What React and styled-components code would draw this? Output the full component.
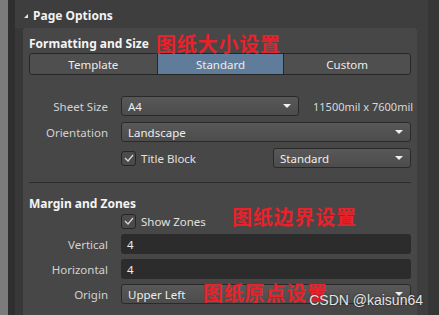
import styled, { createGlobalStyle } from "styled-components";

const GlobalStyle = createGlobalStyle`
  html, body {
    margin: 0;
    padding: 0;
    background: #3c3c3c;
    overflow: hidden;
  }
  body {
    font-family: "Noto Sans", "Open Sans", sans-serif;
    font-size: 11.5px;
    color: #d6d6d6;
  }
`;

const Window = styled.div`
  display: flex;
  width: 439px;
  height: 315px;
  position: relative;
  overflow: hidden;
`;

const Strip = styled.div`
  width: ${(p) => p.$w}px;
  background: ${(p) => p.$bg};
  flex-shrink: 0;
`;

const Panel = styled.div`
  flex: 1;
  min-width: 0;
  display: flex;
  flex-direction: column;
  background: #3e3e3e;
  padding: 0 11px 0 0;
`;

const PanelHeader = styled.div`
  height: 28px;
  display: flex;
  align-items: center;
  gap: 5px;
  padding: 2px 0 0 9px;
  box-sizing: border-box;
  font-weight: 700;
  font-size: 12px;
  color: #f2f2f2;
`;

const Caret = styled.span`
  width: 0;
  height: 0;
  border-left: 4px solid transparent;
  border-bottom: 4px solid #e8e8e8;
  margin-top: 1px;
`;

const PanelBody = styled.div`
  flex: 1;
  display: flex;
  min-width: 0;
  background: #383838;
  padding-left: 8px;
`;

const Section = styled.div`
  flex: 1;
  min-width: 0;
  background: #474747;
  border-radius: 3px 3px 0 0;
  padding: 6px 6px 0 6px;
  display: flex;
  flex-direction: column;
`;

const Title = styled.div`
  font-weight: 700;
  font-size: 12px;
  color: #f4f4f4;
  height: ${(p) => p.$h || 20}px;
  display: flex;
  align-items: center;
  margin-top: ${(p) => p.$mt || 0}px;
`;

const Segments = styled.div`
  display: grid;
  grid-template-columns: 1fr 1fr 1fr;
  height: 22px;
  box-sizing: border-box;
  border: 1px solid #262626;
  border-radius: 3px;
  overflow: hidden;
`;

const Segment = styled.div`
  display: flex;
  align-items: center;
  justify-content: center;
  background: ${(p) => (p.$active ? "#5f7d9b" : "#4f4f4f")};
  color: #ececec;
  & + & {
    border-left: 1px solid #262626;
  }
`;

const Form = styled.div`
  display: grid;
  grid-template-columns: 92px minmax(0, 1fr);
  row-gap: ${(p) => p.$gap}px;
  margin-top: ${(p) => p.$mt || 0}px;
`;

const Label = styled.div`
  padding-right: 13px;
  display: flex;
  align-items: center;
  justify-content: flex-end;
  color: #d2d2d2;
  white-space: nowrap;
`;

const Cell = styled.div`
  display: flex;
  align-items: center;
  gap: 14px;
  min-width: 0;
`;

const SelectBox = styled.div`
  position: relative;
  height: 20px;
  width: ${(p) => (p.$w ? `${p.$w}px` : "auto")};
  flex: ${(p) => (p.$w ? "none" : 1)};
  margin-left: ${(p) => (p.$push ? "auto" : "0")};
  box-sizing: border-box;
  border: 1px solid #2a2a2a;
  border-radius: 3px;
  background: linear-gradient(#585858, #4c4c4c);
  color: #eeeeee;
  display: flex;
  align-items: center;
  padding-left: 6px;
`;

const Arrow = styled.span`
  position: absolute;
  right: 7px;
  top: 7px;
  width: 0;
  height: 0;
  border-left: 4px solid transparent;
  border-right: 4px solid transparent;
  border-top: 4px solid #f0f0f0;
`;

const InputBox = styled.div`
  flex: 1;
  height: 20px;
  box-sizing: border-box;
  background: #2c2c2c;
  border-radius: 3px;
  color: #eeeeee;
  display: flex;
  align-items: center;
  padding-left: 6px;
`;

const Check = styled.span`
  width: 15px;
  height: 15px;
  box-sizing: border-box;
  border: 1px solid #262626;
  border-radius: 3px;
  background: #4b4b4b;
  display: flex;
  align-items: center;
  justify-content: center;
`;

const CheckLabel = styled.label`
  display: flex;
  align-items: center;
  gap: 5px;
  color: #e0e0e0;
  height: ${(p) => p.$h || 20}px;
`;

const Dims = styled.span`
  color: #d8d8d8;
  font-size: 11px;
  white-space: nowrap;
`;

const Divider = styled.div`
  height: 1px;
  background: #2c2c2c;
  margin-top: 14px;
`;

const Note = styled.div`
  position: absolute;
  left: ${(p) => p.$x}px;
  top: ${(p) => p.$y}px;
  font-family: "Noto Sans CJK SC", sans-serif;
  font-weight: 700;
  font-size: 20px;
  color: #e8222a;
  line-height: 1;
  letter-spacing: 0.8px;
  white-space: nowrap;
`;

const Watermark = styled.div`
  position: absolute;
  right: 16px;
  bottom: 7px;
  font-family: "Liberation Sans", sans-serif;
  font-size: 14px;
  color: #e4e4e4;
  text-shadow: 0 0 2px #222;
`;

const Tick = () => (
  <svg width="10" height="8" viewBox="0 0 10 8">
    <path d="M1 4 L4 7 L9 1" fill="none" stroke="#d8d8d8" strokeWidth="1.3" />
  </svg>
);

const Select = ({ value, w, push }) => (
  <SelectBox $w={w} $push={push}>
    {value}
    <Arrow />
  </SelectBox>
);

const CheckItem = ({ children, h }) => (
  <CheckLabel $h={h}>
    <Check>
      <Tick />
    </Check>
    {children}
  </CheckLabel>
);

export default function App() {
  return (
    <Window>
      <GlobalStyle />
      <Strip $w={8} $bg="#7b7b7b" />
      <Strip $w={7} $bg="#2f2f2f" />
      <Panel>
        <PanelHeader>
          <Caret />
          Page Options
        </PanelHeader>
        <PanelBody>
          <Section>
            <Title $h={19}>Formatting and Size</Title>
            <Segments>
              <Segment>Template</Segment>
              <Segment $active>Standard</Segment>
              <Segment>Custom</Segment>
            </Segments>
            <Form $mt={21} $gap={6}>
              <Label>Sheet Size</Label>
              <Cell>
                <Select value="A4" w={178} />
                <Dims>11500mil x 7600mil</Dims>
              </Cell>
              <Label>Orientation</Label>
              <Cell>
                <Select value="Landscape" />
              </Cell>
              <div />
              <Cell>
                <CheckItem>Title Block</CheckItem>
                <Select value="Standard" w={138} push />
              </Cell>
            </Form>
            <Divider />
            <Title $mt={10}>Margin and Zones</Title>
            <Form $gap={5}>
              <div />
              <Cell>
                <CheckItem h={16}>Show Zones</CheckItem>
              </Cell>
              <Label>Vertical</Label>
              <Cell>
                <InputBox>4</InputBox>
              </Cell>
              <Label>Horizontal</Label>
              <Cell>
                <InputBox>4</InputBox>
              </Cell>
              <Label>Origin</Label>
              <Cell>
                <Select value="Upper Left" />
              </Cell>
            </Form>
          </Section>
        </PanelBody>
      </Panel>
      <Strip $w={11} $bg="#363636" />
      <Note $x={156} $y={34}>图纸大小设置</Note>
      <Note $x={232} $y={207}>图纸边界设置</Note>
      <Note $x={203} $y={283}>图纸原点设置</Note>
      <Watermark>CSDN @kaisun64</Watermark>
    </Window>
  );
}
